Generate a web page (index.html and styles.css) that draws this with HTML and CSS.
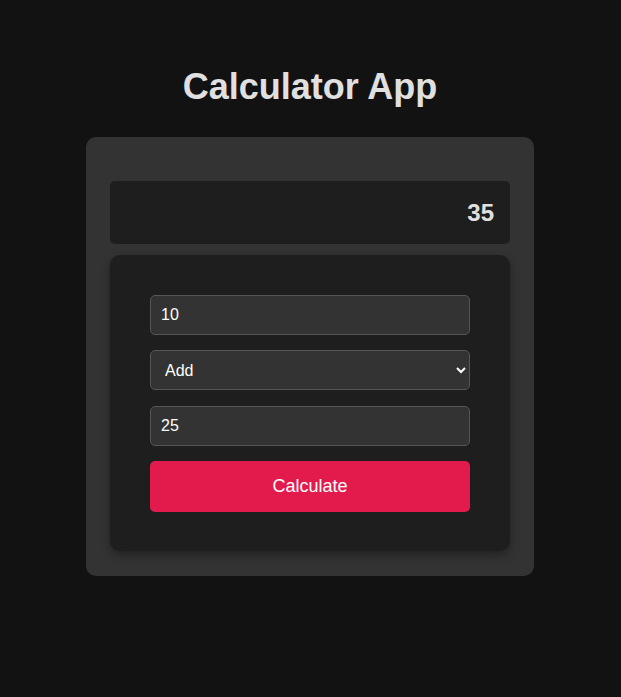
FILE: index.html
```html
<!DOCTYPE html>
<html lang="en">
<head>
<meta charset="utf-8">
<title>Calculator App</title>
<link rel="stylesheet" href="styles.css">
</head>
<body>
<main class="page">
  <h1 class="title">Calculator App</h1>
  <section class="calculator">
    <div class="display">35</div>
    <form class="panel">
      <input class="field" type="number" value="10">
      <select class="field select">
        <option selected>Add</option>
        <option>Subtract</option>
        <option>Multiply</option>
        <option>Divide</option>
      </select>
      <input class="field" type="number" value="25">
      <button class="calc-btn" type="button">Calculate</button>
    </form>
  </section>
</main>
</body>
</html>
```

FILE: styles.css
```css
* { box-sizing: border-box; }

html, body {
  margin: 0;
  padding: 0;
  background: #121212;
  font-family: "Liberation Sans", Arial, sans-serif;
  color: #e0e0e0;
}

.page {
  display: flex;
  flex-direction: column;
  align-items: center;
  padding: 66px 1px 0 0;
}

.title {
  margin: 0 0 30px;
  font-size: 36px;
  font-weight: bold;
  line-height: 41px;
  color: #e0e0e0;
}

.calculator {
  width: 448px;
  background: #333333;
  border-radius: 10px;
  padding: 44px 24px 25px;
}

.display {
  height: 63px;
  background: #1e1e1e;
  border-radius: 5px;
  display: flex;
  align-items: center;
  justify-content: flex-end;
  padding: 0 16px;
  font-size: 24px;
  font-weight: bold;
  color: #e0e0e0;
  margin-bottom: 11px;
}

.panel {
  margin: 0;
  background: #1e1e1e;
  border-radius: 10px;
  padding: 40px 40px 39px;
  display: flex;
  flex-direction: column;
  gap: 15.33px;
  box-shadow: 0 4px 10px rgba(0, 0, 0, 0.35);
}

.field {
  height: 40px;
  width: 100%;
  background: #333333;
  border: 1px solid #555555;
  border-radius: 5px;
  color: #ffffff;
  font-family: "Liberation Sans", Arial, sans-serif;
  font-size: 16px;
  padding: 0 10px;
  margin: 0;
}

.field::-webkit-outer-spin-button,
.field::-webkit-inner-spin-button {
  -webkit-appearance: none;
  margin: 0;
}

.select {
  padding: 0 10px;
}

.calc-btn {
  height: 51px;
  width: 100%;
  background: #e31b4d;
  border: none;
  border-radius: 5px;
  color: #ffffff;
  font-family: "Liberation Sans", Arial, sans-serif;
  font-size: 18px;
  margin: 0;
}
```
